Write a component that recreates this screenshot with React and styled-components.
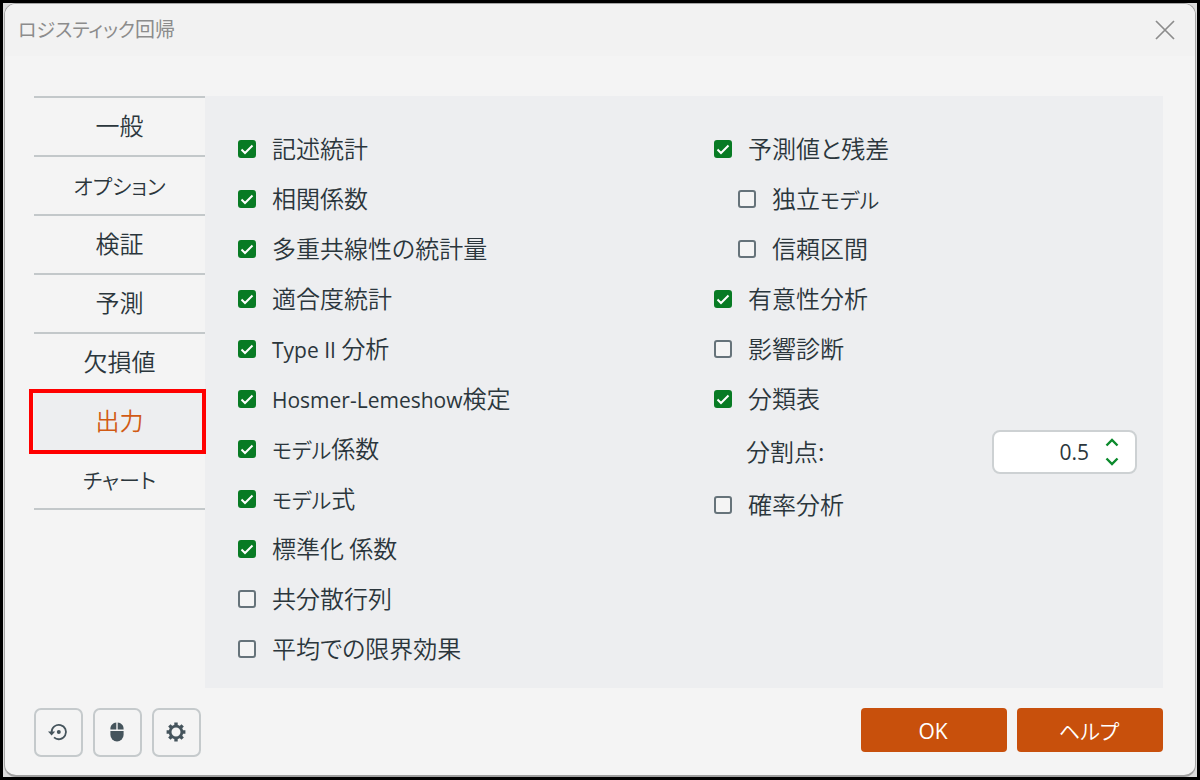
import { useState } from 'react';
import styled, { createGlobalStyle } from 'styled-components';

const TABS = ['一般', 'オプション', '検証', '予測', '欠損値', '出力', 'チャート'];

const LEFT_OPTIONS = [
  { id: 'descriptive', text: '記述統計', checked: true },
  { id: 'correlation', text: '相関係数', checked: true },
  { id: 'multicollinearity', text: '多重共線性の統計量', checked: true },
  { id: 'goodness', text: '適合度統計', checked: true },
  { id: 'type2', text: 'Type II 分析', checked: true },
  { id: 'hosmer', text: 'Hosmer-Lemeshow検定', checked: true },
  { id: 'coefficients', text: 'モデル係数', checked: true },
  { id: 'equation', text: 'モデル式', checked: true },
  { id: 'standardized', text: '標準化 係数', checked: true },
  { id: 'covariance', text: '共分散行列', checked: false },
  { id: 'marginal', text: '平均での限界効果', checked: false },
];

const RIGHT_OPTIONS = [
  { id: 'residuals', text: '予測値と残差', checked: true },
  { id: 'independent', text: '独立モデル', checked: false, nested: true },
  { id: 'confidence', text: '信頼区間', checked: false, nested: true },
  { id: 'significance', text: '有意性分析', checked: true },
  { id: 'influence', text: '影響診断', checked: false },
  { id: 'classification', text: '分類表', checked: true },
];

// Latin and katakana runs are set smaller than the kanji around them
const MixedText = ({ children }) =>
  children.split(/([A-Za-z][A-Za-z -]*|[ァ-ヶー]+)/).map((run, i) => {
    if (/^[A-Za-z]/.test(run)) return <Latin key={i}>{run}</Latin>;
    if (/^[ァ-ヶー]/.test(run)) return <Kana key={i}>{run}</Kana>;
    return run;
  });

const Option = ({ id, text, checked, nested }) => (
  <OptionRow $nested={nested}>
    <CheckBox id={id} type="checkbox" defaultChecked={checked} />
    <OptionLabel htmlFor={id}>
      <MixedText>{text}</MixedText>
    </OptionLabel>
  </OptionRow>
);

const CutoffField = () => {
  const [value, setValue] = useState('0.5');
  const step = (delta) => setValue(String(Math.round((Number(value) + delta) * 10) / 10));

  return (
    <CutoffRow>
      <OptionLabel htmlFor="cutoff">分割点:</OptionLabel>
      <SpinBox>
        <SpinInput id="cutoff" value={value} onChange={(e) => setValue(e.target.value)} />
        <SpinButtons>
          <SpinButton type="button" aria-label="増やす" onClick={() => step(0.1)}>
            <svg width="14" height="9" viewBox="0 0 14 9">
              <path d="M1.5 7.5 7 2l5.5 5.5" />
            </svg>
          </SpinButton>
          <SpinButton type="button" aria-label="減らす" onClick={() => step(-0.1)}>
            <svg width="14" height="9" viewBox="0 0 14 9">
              <path d="M1.5 1.5 7 7l5.5-5.5" />
            </svg>
          </SpinButton>
        </SpinButtons>
      </SpinBox>
    </CutoffRow>
  );
};

const ResetIcon = () => (
  <svg width="20" height="20" viewBox="0 0 20 20">
    <path d="M3.6 10A7.2 7.2 0 1 1 6 15.4" fill="none" stroke="currentColor" strokeWidth="1.8" />
    <path d="M0 9.4h7.2L3.6 13.4z" fill="currentColor" />
    <circle cx="10.8" cy="10" r="2" fill="currentColor" />
  </svg>
);

const MouseIcon = () => (
  <svg width="20" height="20" viewBox="0 0 20 20" fill="currentColor">
    <path d="M9.3 .6V7.6H3.4V6.8C3.4 3.4 6 .8 9.3 .6z" />
    <path d="M10.7 .6V7.6h5.9V6.8C16.6 3.4 14 .8 10.7 .6z" />
    <path d="M3.4 9h13.2v3.8a6.6 6.6 0 0 1-13.2 0z" />
  </svg>
);

const GearIcon = () => (
  <svg width="20" height="20" viewBox="-10 -10 20 20" fill="currentColor">
    {[0, 45, 90, 135].map((angle) => (
      <path key={angle} transform={`rotate(${angle})`} d="M-1.7-9.4h3.4v4h-3.4zM-1.7 5.4h3.4v4h-3.4z" />
    ))}
    <circle r="5.9" fill="none" stroke="currentColor" strokeWidth="2.8" />
  </svg>
);

export default function App() {
  const [tab, setTab] = useState('出力');

  return (
    <Page>
      <GlobalStyle />
      <Backdrop>
        <Dialog>
          <TitleBar>
            <Title>
              <MixedText>ロジスティック回帰</MixedText>
            </Title>
            <CloseButton type="button" aria-label="閉じる">
              <svg width="20" height="20" viewBox="0 0 20 20">
                <path d="M1 1l18 18M19 1 1 19" stroke="#8c8c8c" strokeWidth="1.7" />
              </svg>
            </CloseButton>
          </TitleBar>
          <Content>
            <TabList>
              {TABS.map((name) => (
                <Tab key={name} type="button" $active={name === tab} onClick={() => setTab(name)}>
                  <MixedText>{name}</MixedText>
                </Tab>
              ))}
            </TabList>
            <Panel>
              <Column>
                {LEFT_OPTIONS.map((option) => (
                  <Option key={option.id} {...option} />
                ))}
              </Column>
              <Column>
                {RIGHT_OPTIONS.map((option) => (
                  <Option key={option.id} {...option} />
                ))}
                <CutoffField />
                <Option id="probability" text="確率分析" checked={false} />
              </Column>
            </Panel>
          </Content>
          <Footer>
            <IconButton type="button" aria-label="リセット">
              <ResetIcon />
            </IconButton>
            <IconButton type="button" aria-label="マウス">
              <MouseIcon />
            </IconButton>
            <IconButton type="button" aria-label="設定">
              <GearIcon />
            </IconButton>
            <Spacer />
            <ActionButton type="button">
              <MixedText>OK</MixedText>
            </ActionButton>
            <ActionButton type="button">
              <MixedText>ヘルプ</MixedText>
            </ActionButton>
          </Footer>
        </Dialog>
      </Backdrop>
    </Page>
  );
}

const GlobalStyle = createGlobalStyle`
  * {
    box-sizing: border-box;
  }

  body {
    margin: 0;
    background: #000000;
    color: #2b363c;
    font-family: 'Noto Sans CJK JP', sans-serif;
    font-size: 24px;
    font-weight: 350;
    font-feature-settings: 'palt';
    line-height: 32px;
  }

  button, input {
    font: inherit;
    font-feature-settings: inherit;
    color: inherit;
  }
`;

const Page = styled.div`
  display: flex;
  min-height: 100vh;
  padding: 3px;
`;

const Backdrop = styled.div`
  display: flex;
  flex: 1;
  padding: 0 1px;
  background: #dcdcdc;
`;

const Dialog = styled.main`
  display: flex;
  flex: 1;
  flex-direction: column;
  border: 1px solid #a6a6a6;
  border-bottom: 2px solid #a0a0a0;
  border-radius: 12px;
  background: #f4f4f4;
  overflow: hidden;
`;

const Latin = styled.span`
  font-family: 'Open Sans', sans-serif;
  font-size: 21px;
  font-weight: 400;
  line-height: 1;
`;

const Kana = styled.span`
  font-size: 21px;
  line-height: 1;
`;

const TitleBar = styled.header`
  display: flex;
  align-items: center;
  justify-content: space-between;
  height: 52px;
  padding: 0 20px 0 13px;
  background: #f2f2f2;
`;

const Title = styled.h1`
  margin: 0;
  padding-bottom: 2px;
  color: #8c8c8c;
  font-size: 20px;
  font-weight: 400;

  ${Kana} {
    font-size: 19px;
  }
`;

const CloseButton = styled.button`
  display: flex;
  padding: 0;
  border: 0;
  background: none;
`;

const Content = styled.div`
  display: flex;
  padding: 40px 32px 0 29px;
`;

const TabList = styled.nav`
  display: flex;
  flex-direction: column;
  width: 171px;
`;

const Tab = styled.button`
  position: relative;
  height: 59px;
  padding: 0 0 4px;
  border: 0;
  border-top: 2px solid #c3c8ca;
  background: ${({ $active }) => ($active ? '#edeef0' : 'transparent')};
  color: ${({ $active }) => ($active ? '#d15a14' : 'inherit')};

  &:last-child {
    height: 60px;
    border-bottom: 2px solid #c3c8ca;
  }

  &::after {
    content: '';
    display: ${({ $active }) => ($active ? 'block' : 'none')};
    position: absolute;
    inset: -4px -1px -4px -5px;
    z-index: 1;
    border: 4px solid #ff0000;
  }
`;

const Panel = styled.section`
  display: grid;
  flex: 1;
  grid-template-columns: 1fr 1fr;
  column-gap: 53px;
  padding: 28px 26px 14px 33px;
  background: #edeef0;
`;

const Column = styled.div`
  display: flex;
  flex-direction: column;
`;

const OptionRow = styled.div`
  display: flex;
  align-items: center;
  gap: 16px;
  height: 50px;
  padding-left: ${({ $nested }) => ($nested ? '24px' : '0')};
`;

const CheckBox = styled.input`
  flex: none;
  appearance: none;
  width: 18px;
  height: 18px;
  margin: 0;
  border: 2px solid #66737a;
  border-radius: 3px;
  background: #f4f4f4;

  &:checked {
    border-color: #087b24;
    background: #087b24 url("data:image/svg+xml,%3Csvg xmlns='http://www.w3.org/2000/svg' viewBox='0 0 14 14'%3E%3Cpath d='M1.5 7.5 5 11 12.5 3.5' fill='none' stroke='white' stroke-width='2'/%3E%3C/svg%3E") center / 14px 14px;
  }
`;

const OptionLabel = styled.label`
  padding-bottom: 2px;
  white-space: pre;
`;

const CutoffRow = styled.div`
  display: flex;
  align-items: center;
  justify-content: space-between;
  height: 56px;
  padding-left: 32px;
`;

const SpinBox = styled.div`
  display: flex;
  align-items: center;
  width: 145px;
  height: 44px;
  padding-right: 16px;
  border: 2px solid #cdd1d3;
  border-radius: 8px;
  background: #ffffff;
`;

const SpinInput = styled.input`
  flex: 1;
  min-width: 0;
  padding: 0 16px 0 0;
  border: 0;
  outline: 0;
  background: none;
  font-family: 'Open Sans', sans-serif;
  font-size: 21px;
  font-weight: 400;
  text-align: right;
`;

const SpinButtons = styled.div`
  display: flex;
  flex-direction: column;
  gap: 10px;
`;

const SpinButton = styled.button`
  display: flex;
  padding: 0;
  border: 0;
  background: none;

  svg {
    fill: none;
    stroke: #0b8a2c;
    stroke-width: 2.4;
  }
`;

const Footer = styled.footer`
  display: flex;
  align-items: flex-start;
  gap: 10px;
  padding: 20px 32px 17px 29px;
`;

const IconButton = styled.button`
  display: flex;
  align-items: center;
  justify-content: center;
  width: 49px;
  height: 49px;
  padding: 0 2px 2px 0;
  border: 2px solid #c5cacc;
  border-radius: 7px;
  background: none;
  color: #45545c;
`;

const Spacer = styled.div`
  flex: 1;
`;

const ActionButton = styled.button`
  width: 146px;
  height: 44px;
  padding: 0 2px 2px 0;
  border: 0;
  border-radius: 4px;
  background: #c8500c;
  color: #ffffff;
`;
